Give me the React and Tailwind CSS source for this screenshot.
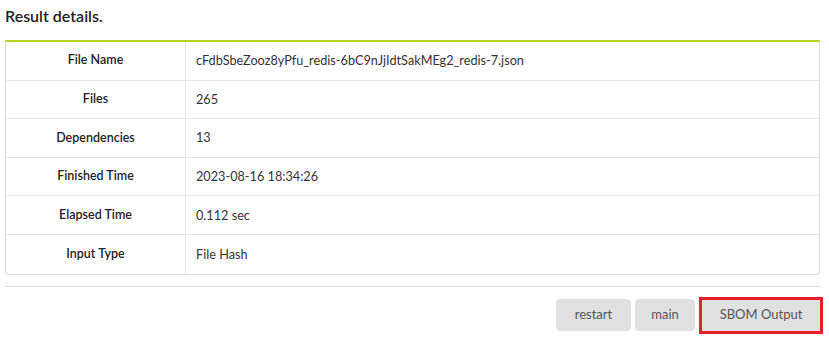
import React from "react";

const rows = [
  { label: "File Name", value: "cFdbSbeZooz8yPfu_redis-6bC9nJjIdtSakMEg2_redis-7.json" },
  { label: "Files", value: "265" },
  { label: "Dependencies", value: "13" },
  { label: "Finished Time", value: "2023-08-16 18:34:26" },
  { label: "Elapsed Time", value: "0.112 sec" },
  { label: "Input Type", value: "File Hash" },
];

const App = () => (
  <div className="w-[829px] h-[342px] bg-white font-['Lato',sans-serif] text-[#333]">
    <div className="ml-[5px] w-[815px] pt-[5px]">
      <h2 className="text-[16px] font-semibold text-[#222] leading-[22px] mb-[13px]">
        Result details.
      </h2>
      <div className="border-t-2 border-t-[#b5d21c] border-x border-b border-[#dcdcdc] rounded-b-[4px]">
        {rows.map((row, idx) => (
          <div
            key={idx}
            className={`flex h-[38.6px] ${idx < rows.length - 1 ? "border-b border-[#e6e6e6]" : ""}`}
          >
            <div className="w-[180px] border-r border-[#e6e6e6] flex items-center justify-center text-[12.5px] font-semibold text-[#222]">
              {row.label}
            </div>
            <div className="flex-1 flex items-center pl-[10px] text-[12.7px] text-[#333]">
              {row.value}
            </div>
          </div>
        ))}
      </div>
      <div className="mt-[11px] border-t border-[#dedede]" />
      <div className="flex justify-end items-center gap-[4px] mt-[10px] mr-[-3px]">
        <button className="w-[75px] h-[32px] bg-[#e1e1e1] rounded-[4px] text-[13px] text-[#555]">
          restart
        </button>
        <button className="w-[60px] h-[32px] bg-[#e1e1e1] rounded-[4px] text-[13px] text-[#555]">
          main
        </button>
        <button className="w-[124px] h-[37px] bg-[#e1e1e1] border-[3px] border-[#e8202a] text-[13px] text-[#555]">
          SBOM Output
        </button>
      </div>
    </div>
  </div>
);

export default App;
